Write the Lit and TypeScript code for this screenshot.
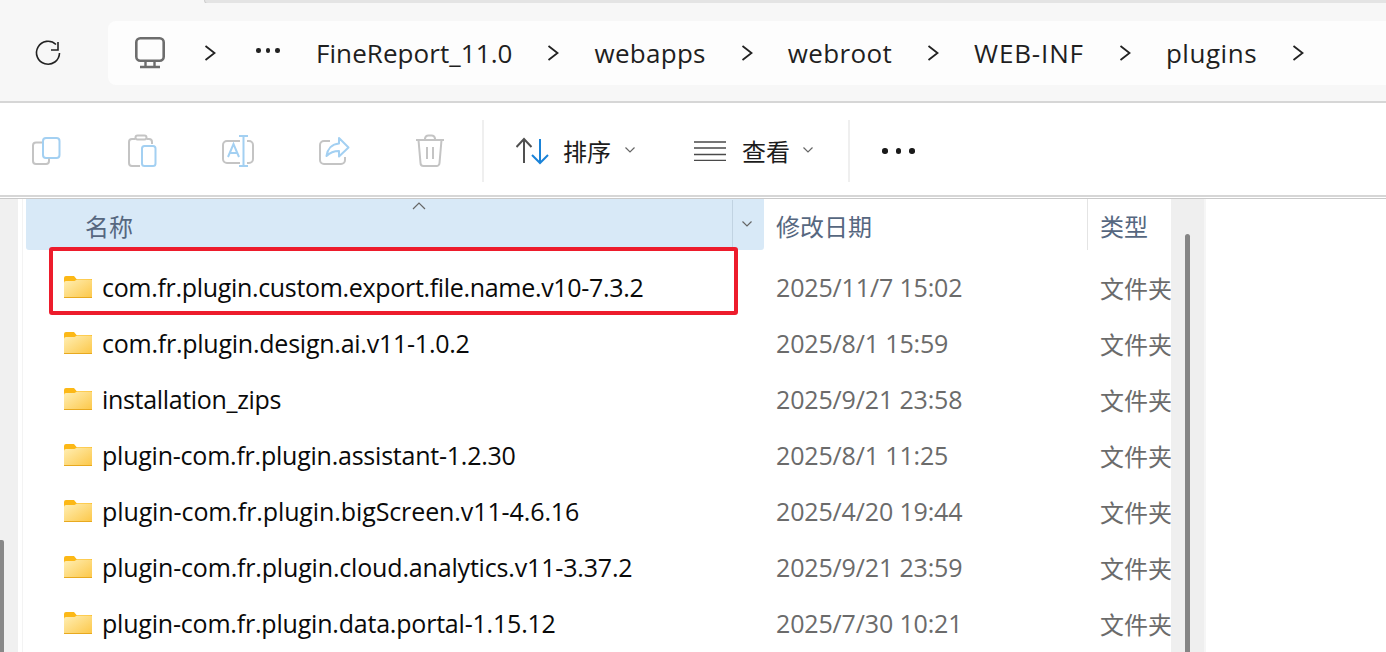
import { LitElement, html, css, svg } from "lit";
import { customElement } from "lit/decorators.js";

const GRAY = "#c4c4c4";
const BLUE = "#a3d0f2";

const icons = {
  copy: svg`<rect x="14" y="5" width="16.5" height="20" rx="3" fill="none" stroke="${BLUE}" stroke-width="2"/><path d="M13 9.5H7a3 3 0 0 0-3 3V28a3 3 0 0 0 3 3h10a3 3 0 0 0 3-3v-2.5" fill="none" stroke="${GRAY}" stroke-width="2"/>`,
  paste: svg`<path d="M10 6H7a3 3 0 0 0-3 3v21a3 3 0 0 0 3 3h8M22 6h2a3 3 0 0 1 3 3v2" fill="none" stroke="${GRAY}" stroke-width="2"/><rect x="10.500" y="2.500" width="11" height="4" rx="2" fill="none" stroke="${GRAY}" stroke-width="2"/><rect x="17" y="13" width="13.500" height="20" rx="2.500" fill="none" stroke="${BLUE}" stroke-width="2"/>`,
  rename: svg`<path d="M19 8H6a4 4 0 0 0-4 4v14a4 4 0 0 0 4 4h13M26 8h2a4 4 0 0 1 4 4v14a4 4 0 0 1-4 4h-2" fill="none" stroke="${GRAY}" stroke-width="2"/><path d="M22.500 3v30M18 3h9M18 33h9M7 24l5.500-13 5.500 13M9 20h7" fill="none" stroke="${BLUE}" stroke-width="2"/>`,
  share: svg`<path d="M13 8H7a4 4 0 0 0-4 4v15a4 4 0 0 0 4 4h17a4 4 0 0 0 4-4v-3" fill="none" stroke="${GRAY}" stroke-width="2"/><path d="M22 5l9.500 9.500-9.500 9v-5.500c-5 0-9 1.500-12.500 5 1-7 5.500-12 12.500-12.500z" fill="none" stroke="${BLUE}" stroke-width="2" stroke-linejoin="round"/>`,
  trash: svg`<path d="M3 7h28M12 7V5.500a3.500 3.500 0 0 1 3.500-3h3a3.500 3.500 0 0 1 3.500 3V7M5.500 7l2 23a3 3 0 0 0 3 3h13a3 3 0 0 0 3-3l2-23M14 14v12M20 14v12" fill="none" stroke="${GRAY}" stroke-width="2"/>`,
};

const rows: [string, string, number][] = [
  ["com.fr.plugin.custom.export.file.name.v10-7.3.2", "2025/11/7 15:02", -0.32],
  ["com.fr.plugin.design.ai.v11-1.0.2", "2025/8/1 15:59", -0.24],
  ["installation_zips", "2025/9/21 23:58", -0.33],
  ["plugin-com.fr.plugin.assistant-1.2.30", "2025/8/1 11:25", -0.23],
  ["plugin-com.fr.plugin.bigScreen.v11-4.6.16", "2025/4/20 19:44", -0.1],
  ["plugin-com.fr.plugin.cloud.analytics.v11-3.37.2", "2025/9/21 23:59", -0.17],
  ["plugin-com.fr.plugin.data.portal-1.15.12", "2025/7/30 10:21", -0.2],
];

const crumbs: [string, number][] = [
  ["FineReport_11.0", 0.07],
  ["webapps", 0.28],
  ["webroot", 0.35],
  ["WEB-INF", 0.85],
  ["plugins", 0.55],
];

const chevronRight = html`<svg class="crumb-chev" width="12" height="20" viewBox="0 0 12 20"><path d="M1.500 3l9 7-9 7" fill="none" stroke="#222" stroke-width="1.800"/></svg>`;
const chevronDown = html`<svg width="12" height="8" viewBox="0 0 12 8"><path d="M1.500 1.500l4.500 4.500 4.500-4.500" fill="none" stroke="#666" stroke-width="1.200"/></svg>`;

const folder = html`<svg class="folder" width="28" height="22" viewBox="0 0 28 22">
  <defs><linearGradient id="fg" x1="0" y1="0" x2="1" y2="1"><stop offset="0" stop-color="#ffefb5"/><stop offset="1" stop-color="#fcc748"/></linearGradient></defs>
  <path d="M0 2a2 2 0 0 1 2-2h8l2.500 3H28v5H0z" fill="#fcb816"/>
  <path d="M0 21V7a2 2 0 0 1 2-2h8.500l2.500-1.500H27a1 1 0 0 1 1 1V21a1 1 0 0 1-1 1H1a1 1 0 0 1-1-1z" fill="url(#fg)"/>
  <rect x="0" y="21" width="28" height="1" fill="#e8a91f"/>
</svg>`;

@customElement("app-root")
export class AppRoot extends LitElement {
  static styles = css`
    :host {
      display: block;
      width: 1386px;
      height: 652px;
      overflow: hidden;
      position: relative;
      background: #fff;
      font-family: "Open Sans", "Noto Sans CJK SC", sans-serif;
    }
    .top-strip { height: 3px; background: #f7f7f7; position: relative; }
    .tab-edge {
      margin-left: 204px; height: 4px; background: #e4e4e4;
      border-bottom: 1px solid #cfcfcf; border-left: 1px solid #cfcfcf;
      border-bottom-left-radius: 4px; box-sizing: border-box;
    }
    .address {
      height: 98px; box-sizing: border-box; background: #f7f7f7;
      padding: 18px 0 16px 108px; position: relative;
      display: flex;
    }
    .refresh { position: absolute; left: 34px; top: 36px; }
    .bar {
      flex: 1; background: #fdfdfd; border-radius: 8px 0 0 8px;
      display: flex; align-items: center; gap: 35px; padding-left: 27px;
      font-size: 26px; color: #1f1f1f;
    }
    .bar .home { margin-right: 4px; }
    .dots-s { width: 25px; display: flex; gap: 5px; margin: -5px 0 0 5px; }
    .dots-s i { width: 4.500px; height: 4.500px; border-radius: 50%; background: #222; }
    .rule { height: 2px; background: #d6d6d6; }
    .toolbar {
      height: 92px; box-sizing: border-box; padding: 4px 0 0 29px;
      display: flex; align-items: center;
      font-size: 24px; color: #1c1c1c; font-family: "Noto Sans CJK SC", sans-serif;
    }
    .tool { width: 96px; height: 36px; flex: none; }
    .tool svg { display: block; }
    .sep { width: 2px; height: 62px; background: #efefef; flex: none; }
    .sep.first { margin-left: -27px; }
    .group { display: flex; align-items: center; }
    .sort { margin-left: 32px; }
    .label { width: 50px; margin-top: -2px; }
    .sort .label { margin-left: 14px; }
    .view .label { margin-left: 16px; }
    .caret { display: flex; margin-top: -3px; }
    .sort .caret { margin-left: 11px; }
    .view .caret { margin-left: 10px; }
    .view { margin-left: 58px; }
    .sep.second { margin-left: 34px; }
    .more { display: flex; gap: 8px; margin-left: 32px; }
    .more i { width: 5.500px; height: 5.500px; border-radius: 50%; background: #1a1a1a; }
    .gap-line { height: 1px; background: #fff; }
    .rule2 { height: 1px; background: #c9c9c9; }
    .main { display: flex; height: 453px; }
    .side { width: 18px; background: #f0f0f0; position: relative; flex: none; }
    .side-thumb { position: absolute; left: 0; top: 341px; bottom: 0; width: 4px; background: #888; border-radius: 0 2px 0 0; }
    .side-gap { width: 4px; flex: none; border-right: 1px solid #f3f3f3; }
    .list { width: 1145px; flex: none; overflow: hidden; margin-left: 3px; }
    .head { display: grid; grid-template-columns: 738px 324px 83px; height: 51px; }
    .hcell {
      font-family: "Noto Sans CJK SC", sans-serif; font-size: 24px; color: #56677f;
      display: flex; align-items: center; height: 51px; box-sizing: border-box; position: relative;
    }
    .hname {
      background: #d8e9f7; border-radius: 0 0 3px 3px; padding-left: 59px;
      display: grid; grid-template-columns: 1fr 32px;
    }
    .hname .drop {
      height: 51px; border-left: 1px solid #c1d3e2; display: flex; box-sizing: border-box;
      align-items: center; justify-content: center; padding: 0 3px 3px 0;
    }
    .hname .up { position: absolute; left: 386px; top: 3px; }
    .hdate { padding-left: 12px; }
    .htype { padding-left: 12px; border-left: 1px solid #e4e4e4; margin-left: -1px; }
    .hspan { display: flex; align-items: center; height: 51px; margin-top: 1px; }
    .row {
      display: grid; grid-template-columns: 738px 324px 83px; height: 56px; align-items: center;
    }
    .rows { padding-top: 9px; }
    .name {
      display: flex; align-items: center; gap: 10px; padding-left: 38px;
      font-size: 25px; color: #0a0a0a; white-space: nowrap;
    }
    .date { padding-left: 12px; font-size: 25px; color: #6b6b6b; letter-spacing: -0.15px; white-space: nowrap; }
    .type {
      padding-left: 12px; font-family: "Noto Sans CJK SC", sans-serif; font-size: 24px;
      color: #6b6b6b; white-space: nowrap; overflow: hidden;
    }
    .scroll { width: 33px; background: #efefef; position: relative; flex: none; }
    .thumb { position: absolute; left: 14px; top: 35px; bottom: 0; width: 5px; background: #858585; border-radius: 2.500px 2.500px 0 0; }
    .after { width: 2px; background: #f6f6f6; flex: none; }
    .mark {
      position: absolute; left: 49px; top: 247px; width: 689px; height: 68px;
      box-sizing: border-box; border: 4px solid #ed1c2c; border-radius: 3px; pointer-events: none;
    }
  `;

  render() {
    return html`
      <div class="top-strip"><div class="tab-edge"></div></div>
      <div class="address">
        <svg class="refresh" width="28" height="28" viewBox="0 0 28 28">
          <path d="M22 5.500A11.500 11.500 0 1 0 25.500 14M24 3v8h-7" fill="none" stroke="#222" stroke-width="1.600"/>
        </svg>
        <div class="bar">
          <svg class="home" width="30" height="32" viewBox="0 0 30 32">
            <rect x="1.300" y="1.300" width="27.400" height="22.400" rx="4" fill="none" stroke="#6d6d6d" stroke-width="2.600"/>
            <path d="M10.500 24v5M19.500 24v5M5 30h20" fill="none" stroke="#6d6d6d" stroke-width="2.400"/>
          </svg>
          ${chevronRight}
          <div class="dots-s"><i></i><i></i><i></i></div>
          ${crumbs.map(([c, t]) => html`<span style="letter-spacing:${t}px">${c}</span>${chevronRight}`)}
        </div>
      </div>
      <div class="rule"></div>
      <div class="toolbar">
        ${Object.values(icons).map(
          (p) => html`<div class="tool"><svg width="34" height="36" viewBox="0 0 34 36">${p}</svg></div>`
        )}
        <div class="sep first"></div>
        <div class="group sort">
          <svg width="33" height="28" viewBox="0 0 33 28">
            <path d="M8 2v24M0.500 10L8 2l7.500 8" fill="none" stroke="#505050" stroke-width="2"/>
            <path d="M24 2v24M16 18l8 8 8-8" fill="none" stroke="#1a83d8" stroke-width="2"/>
          </svg>
          <span class="label">排序</span><span class="caret">${chevronDown}</span>
        </div>
        <div class="group view">
          <svg width="32" height="20" viewBox="0 0 32 20">
            <path d="M0 1h32M0 7h32M0 13.500h32M0 19.500h32" fill="none" stroke="#4a4a4a" stroke-width="1.600"/>
          </svg>
          <span class="label">查看</span><span class="caret">${chevronDown}</span>
        </div>
        <div class="sep second"></div>
        <div class="more"><i></i><i></i><i></i></div>
      </div>
      <div class="rule"></div>
      <div class="gap-line"></div>
      <div class="rule2"></div>
      <div class="main">
        <div class="side"><div class="side-thumb"></div></div>
        <div class="side-gap"></div>
        <div class="list">
          <div class="head">
            <div class="hcell hname">
              <span class="hspan">名称</span>
              <div class="drop">${chevronDown}</div>
              <svg class="up" width="14" height="8" viewBox="0 0 14 8"><path d="M1 7l6-6 6 6" fill="none" stroke="#666" stroke-width="1.200"/></svg>
            </div>
            <div class="hcell hdate"><span class="hspan">修改日期</span></div>
            <div class="hcell htype"><span class="hspan">类型</span></div>
          </div>
          <div class="rows">
            ${rows.map(
              ([n, d, t]) => html`<div class="row">
                <div class="name">${folder}<span style="letter-spacing:${t}px">${n}</span></div>
                <div class="date">${d}</div>
                <div class="type">文件夹</div>
              </div>`
            )}
          </div>
        </div>
        <div class="scroll"><div class="thumb"></div></div>
        <div class="after"></div>
      </div>
      <div class="mark"></div>
    `;
  }
}
